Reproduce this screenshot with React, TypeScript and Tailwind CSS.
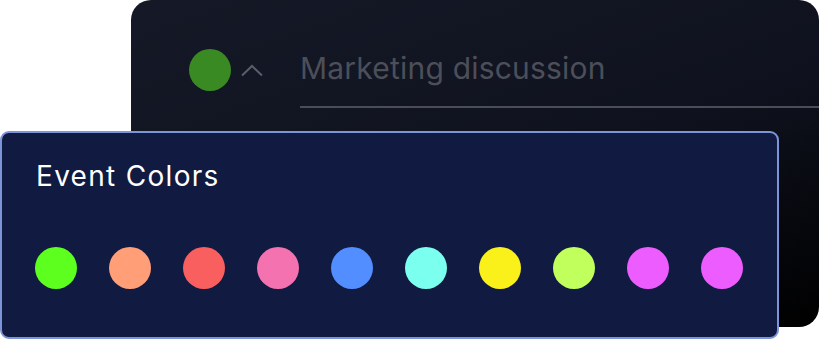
import React from 'react';

const swatches = [
  '#5dff1f',
  '#ff9e77',
  '#fa5f5f',
  '#f472b0',
  '#528eff',
  '#7bffee',
  '#fbf11a',
  '#c0ff5c',
  '#ec5cff',
  '#ec5cff',
];

export default function App() {
  return (
    <div
      className="relative w-[819px] h-[339px] bg-white overflow-hidden"
      style={{ fontFamily: 'Inter, "Noto Sans", sans-serif' }}
    >
      {/* event editor behind */}
      <div className="ml-[131px] w-[688px] h-[327px] rounded-[20px] bg-[linear-gradient(160deg,#151826_0%,#0f121e_55%,#000000_100%)] pt-[49px]">
        <div className="flex items-start">
          <div className="ml-[58px] w-[42px] h-[42px] rounded-full bg-[#3a8a23]" />
          <svg className="ml-[9px] mt-[14px]" width="24" height="15" viewBox="0 0 24 15" fill="none">
            <path d="M2 12.5 L12 3 L22 12.5" stroke="#5b5e68" strokeWidth="2" />
          </svg>
          <div className="ml-[36px] flex-1 mt-[-3px]">
            <div className="text-[30px] leading-[44px] text-[#4c4f59] tracking-[0.2px]">Marketing discussion</div>
            <div className="mt-[16px] h-[2px] bg-[#4a4d56]" />
          </div>
        </div>
      </div>

      {/* colour picker popover */}
      <div className="absolute left-0 top-[131px] w-[779px] h-[208px] rounded-[9px] border-2 border-[#7c95d8] bg-[#111a40]">
        <div className="pl-[34px] pt-[24px] text-[28px] leading-[38px] text-white tracking-[1.3px]">Event Colors</div>
        <div className="mt-[52px] pl-[33px] flex gap-[32px]">
          {swatches.map((c, i) => (
            <div key={i} className="w-[42px] h-[42px] rounded-full" style={{ backgroundColor: c }} />
          ))}
        </div>
      </div>
    </div>
  );
}
